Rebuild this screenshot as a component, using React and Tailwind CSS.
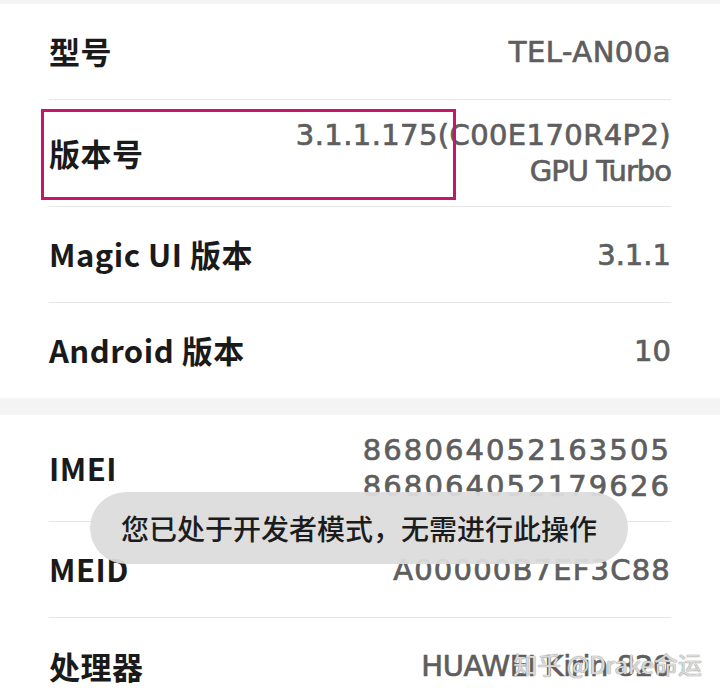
import React from 'react';

const groups = [
  [
    { label: '型号', values: [['TEL-AN00a', 'tracking-[0.5px]']], h: 'h-[96px]' },
    {
      label: '版本号',
      values: [['3.1.1.175(C00E170R4P2)', 'tracking-[0.4px]'], ['GPU Turbo', 'tracking-[-1px]']],
      h: 'h-[107px]',
      marked: true,
    },
    { label: 'Magic UI 版本', values: [['3.1.1', 'tracking-[0px]']], h: 'h-[96px]' },
    { label: 'Android 版本', values: [['10', 'tracking-[0px]']], h: 'h-[95px]' },
  ],
  [
    {
      label: 'IMEI',
      values: [['868064052163505', 'tracking-[2.1px]'], ['868064052179626', 'tracking-[2.1px]']],
      h: 'h-[107px]',
    },
    { label: 'MEID', values: [['A00000B7EF3C88', 'tracking-[1.2px]']], h: 'h-[96px]' },
    { label: '处理器', values: [['HUAWEI Kirin 820', 'tracking-[-0.4px]']], h: 'h-[96px]' },
  ],
];

const Row = ({ item, last }) => (
  <div className={`relative mx-[49px] flex items-center justify-between ${item.h} ${last ? '' : 'border-b border-[#e6e6e6]'}`}>
    {item.marked && (
      <div className="pointer-events-none absolute left-[-8px] top-[9px] h-[91px] w-[415px] border-[3px] border-[#c4166c]" />
    )}
    <span className="font-['Noto_Sans_CJK_SC',sans-serif] text-[31px] font-bold tracking-[0.5px] text-[#1a1a1a]">
      {item.label}
    </span>
    <div className="flex flex-col items-end font-['DejaVu_Sans',sans-serif] text-[29px] leading-[36px] text-[#5e5e5e] [-webkit-text-stroke:0.7px_#5e5e5e]">
      {item.values.map(([v, t]) => (
        <span key={v} className={t}>{v}</span>
      ))}
    </div>
  </div>
);

export default function App() {
  return (
    <div className="relative h-[690px] w-[720px] overflow-hidden bg-[#f4f4f4] pt-[4px]">
      <div className="bg-white">
        {groups[0].map((item, i) => (
          <Row key={item.label} item={item} last={i === groups[0].length - 1} />
        ))}
      </div>
      <div className="mt-[17px] bg-white pb-[20px]">
        {groups[1].map((item, i) => (
          <Row key={item.label} item={item} last={i === groups[1].length - 1} />
        ))}
      </div>

      {/* toast */}
      <div className="absolute left-[90px] top-[492px] flex h-[72px] w-[538px] items-center justify-center rounded-full bg-[#dcdcdc]/95">
        <span className="font-['Noto_Sans_CJK_SC',sans-serif] text-[28px] font-medium text-[#1c1c1c]">
          您已处于开发者模式，无需进行此操作
        </span>
      </div>

      {/* watermark */}
      <div className="absolute right-[18px] top-[646px] font-['Noto_Sans_CJK_SC',sans-serif] text-[24px] text-white/70 [text-shadow:0_0_1px_#888,0_0_1px_#888]">
        知乎 @Drake命运
      </div>
    </div>
  );
}
